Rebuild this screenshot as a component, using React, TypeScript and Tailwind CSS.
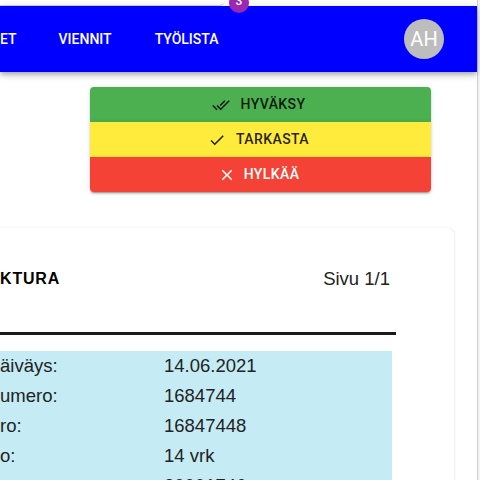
import React from "react";

const DoneAll = () => (
  <svg viewBox="0 0 24 24" className="w-[18px] h-[18px]" fill="currentColor">
    <path d="M18 7l-1.41-1.41-6.34 6.34 1.41 1.41L18 7zm4.24-1.41L11.66 16.17 7.48 12l-1.41 1.41L11.66 19l12-12-1.42-1.41zM.41 13.41L6 19l1.41-1.41L1.83 12 .41 13.41z" />
  </svg>
);
const Check = () => (
  <svg viewBox="0 0 24 24" className="w-[18px] h-[18px]" fill="currentColor">
    <path d="M9 16.17L4.83 12l-1.42 1.41L9 19 21 7l-1.41-1.41z" />
  </svg>
);
const Close = () => (
  <svg viewBox="0 0 24 24" className="w-[18px] h-[18px]" fill="currentColor">
    <path d="M19 6.41L17.59 5 12 10.59 6.41 5 5 6.41 10.59 12 5 17.59 6.41 19 12 13.41 17.59 19 19 17.59 13.41 12z" />
  </svg>
);

const rows = [
  ["äiväys:", "14.06.2021"],
  ["umero:", "1684744"],
  ["ro:", "16847448"],
  ["o:", "14 vrk"],
  ["", "20001746"],
];

export default function App() {
  return (
    <div className="w-[480px] h-[480px] overflow-hidden bg-white flex font-[family-name:Roboto,sans-serif]">
      <div className="w-[477px] flex flex-col shrink-0">
        <div className="h-[6px] shrink-0">
          <div className="w-[225px] h-[6px] bg-white border-b border-[#d4d4d4] rounded-br-[6px]" />
        </div>
        <header className="relative h-[66px] shrink-0 bg-[#0000ff] text-white flex items-center shadow-[0_2px_4px_-1px_rgba(0,0,0,0.2),0_4px_5px_0_rgba(0,0,0,0.14),0_1px_10px_0_rgba(0,0,0,0.12)] z-10">
          <span className="text-[14px] font-medium uppercase">ET</span>
          <span className="ml-[42px] text-[14px] font-medium uppercase">Viennit</span>
          <span className="ml-[43px] text-[14px] font-medium uppercase">Työlista</span>
          <div className="ml-auto mr-[33px] w-[40px] h-[40px] rounded-full bg-[#bdbdbd] flex items-center justify-center text-[20px] text-white">
            AH
          </div>
          <div className="absolute left-[229px] top-[-13px] w-[20px] h-[20px] rounded-full bg-[#9c27b0] text-white text-[12px] font-medium flex items-center justify-center pb-[4px]">
            3
          </div>
        </header>

        <div className="mt-[15px] ml-[90px] w-[341px] flex flex-col">
          <div className="h-[35px] rounded-t-[4px] bg-[#4caf50] text-[rgba(0,0,0,0.87)] flex items-center justify-center shadow-[0_3px_1px_-2px_rgba(0,0,0,0.2),0_2px_2px_0_rgba(0,0,0,0.14),0_1px_5px_0_rgba(0,0,0,0.12)]">
            <span className="ml-[-4px] mr-[11px] flex"><DoneAll /></span>
            <span className="text-[14px] font-medium tracking-[0.4px] uppercase">Hyväksy</span>
          </div>
          <div className="h-[35px] bg-[#ffeb3b] text-[rgba(0,0,0,0.87)] flex items-center justify-center shadow-[0_3px_1px_-2px_rgba(0,0,0,0.2),0_2px_2px_0_rgba(0,0,0,0.14),0_1px_5px_0_rgba(0,0,0,0.12)]">
            <span className="ml-[-4px] mr-[10px] flex"><Check /></span>
            <span className="text-[14px] font-medium tracking-[0.4px] uppercase">Tarkasta</span>
          </div>
          <div className="h-[35px] rounded-b-[4px] bg-[#f44336] text-white flex items-center justify-center shadow-[0_3px_1px_-2px_rgba(0,0,0,0.2),0_2px_2px_0_rgba(0,0,0,0.14),0_1px_5px_0_rgba(0,0,0,0.12)]">
            <span className="ml-[-4px] mr-[8px] flex"><Close /></span>
            <span className="text-[14px] font-medium tracking-[0.4px] uppercase">Hylkää</span>
          </div>
        </div>

        <div className="mt-[36px] ml-[-20px] w-[474px] pl-[20px] flex-1 bg-white rounded-[6px] shadow-[0_1px_3px_0_rgba(0,0,0,0.12),0_0_1px_0_rgba(0,0,0,0.1)] font-[family-name:'Liberation_Sans',Arial,sans-serif]">
          <div className="mt-[39px] w-[390px] h-[24px] flex items-center justify-between">
            <span className="ml-[-22px] text-[16px] font-bold tracking-[0.8px] text-black">FAKTURA</span>
            <span className="text-[18.5px] text-[#222]">Sivu 1/1</span>
          </div>
          <div className="mt-[41px] w-[396px] h-[3px] bg-[#1a1a1a]" />
          <div className="mt-[16px] w-[392px] bg-[#c5ecf4] text-[18.5px] text-[#222]">
            {rows.map(([l, v], i) => (
              <div key={i} className="h-[30px] flex items-center">
                <span className="w-[164px]">{l}</span>
                <span>{v}</span>
              </div>
            ))}
          </div>
        </div>
      </div>
      <div className="w-[3px] h-full border-l border-[#cfcfcf] bg-[#f3f3f3]" />
    </div>
  );
}
